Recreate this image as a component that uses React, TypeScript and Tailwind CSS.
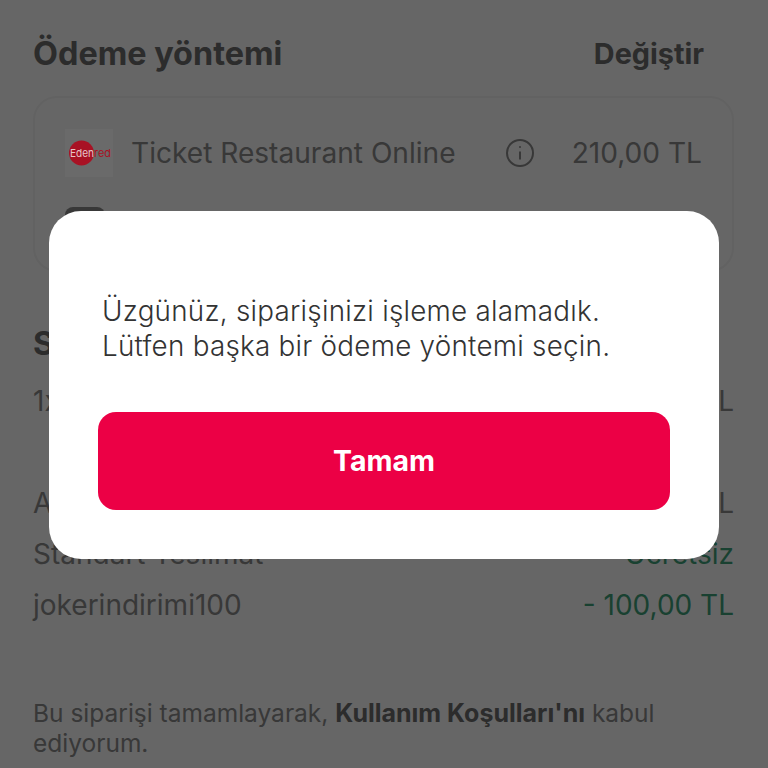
const font = "font-['Inter',sans-serif]";

function Row({ left, right, green }: { left: string; right: string; green?: boolean }) {
  return (
    <div className="flex h-[51px] items-center justify-between text-[28px] text-[#8c8c8c]">
      <span>{left}</span>
      <span className={green ? "text-[#3fa37c]" : ""}>{right}</span>
    </div>
  );
}

// sits above the backdrop because the red in the reference is brighter than the dimmed page
function EdenredLogo() {
  return (
    <div className="relative z-10 flex h-[48px] w-[48px] items-center justify-center bg-[#6a6a6a]">
      <svg width="48" height="26" viewBox="0 0 48 26">
        <circle cx="16.5" cy="13" r="12.5" fill="#a81224" />
        <text x="5" y="17" fontSize="11" textLength="24" lengthAdjust="spacingAndGlyphs" fill="#e6c4c8" fontFamily="Inter, sans-serif">Eden</text>
        <text x="29" y="17" fontSize="11" textLength="17" lengthAdjust="spacingAndGlyphs" fill="#a81224" fontFamily="Inter, sans-serif">red</text>
      </svg>
    </div>
  );
}

export default function App() {
  return (
    <div className={`relative h-[768px] w-[768px] overflow-hidden bg-white text-[#6e6e6e] ${font}`}>
      <div className="pl-[33px] pr-[34px] pt-[34px]">
        <div className="flex items-center justify-between pr-[30px]">
          <h2 className="text-[32.4px] font-bold leading-[40px]">Ödeme yöntemi</h2>
          <span className="text-[28.8px] font-bold leading-[40px]">Değiştir</span>
        </div>

        <div className="mt-[22px] h-[176px] rounded-[24px] border-2 border-[#f5f5f5] px-[30px] pt-[29px]">
          <div className="flex h-[52px] items-center text-[28.1px] text-[#8c8c8c]">
            <EdenredLogo />
            <span className="ml-[18px] flex-1">Ticket Restaurant Online</span>
            <svg width="30" height="30" viewBox="0 0 30 30" fill="none" stroke="#8c8c8c" strokeWidth="2">
              <circle cx="15" cy="15" r="13" />
              <path d="M15 13.5v8" />
              <circle cx="15" cy="9" r="1" fill="#8c8c8c" stroke="none" />
            </svg>
            <span className="ml-[37px]">210,00 TL</span>
          </div>
          <div className="mt-[28px] h-[40px] w-[40px] rounded-[8px] bg-[#8c8c8c]" />
        </div>

        <h2 className="mt-[52px] text-[32.4px] font-bold leading-[40px]">Sipariş özeti</h2>
        <div className="mt-[11px]">
          <Row left="1x Menü" right="310,00 TL" />
        </div>
        <div className="mt-[51px]">
          <Row left="Ara Toplam" right="310,00 TL" />
          <Row left="Standart Teslimat" right="Ücretsiz" green />
          <Row left="jokerindirimi100" right="- 100,00 TL" green />
        </div>

        <p className="mt-[68px] text-[24.5px] leading-[30px] text-[#8c8c8c]">
          Bu siparişi tamamlayarak, <b className="text-[25px] font-bold text-[#6e6e6e]">Kullanım Koşulları'nı</b> kabul ediyorum.
        </p>
      </div>

      {/* dimmed backdrop + dialog */}
      <div className="absolute inset-0 bg-black/60" />
      <div className="absolute left-[49px] top-[211px] z-20 flex h-[348px] w-[670px] flex-col rounded-[32px] bg-white px-[49px] pt-[83px]">
        <p className="pl-[4px] text-[27.8px] font-[350] leading-[35px] tracking-[0.25px] text-[#333333]">
          Üzgünüz, siparişinizi işleme alamadık.
          <br />
          Lütfen başka bir ödeme yöntemi seçin.
        </p>
        <button className="mt-[48px] h-[98px] rounded-[18px] bg-[#ec0045] text-[28.5px] font-bold text-white">
          Tamam
        </button>
      </div>
    </div>
  );
}
